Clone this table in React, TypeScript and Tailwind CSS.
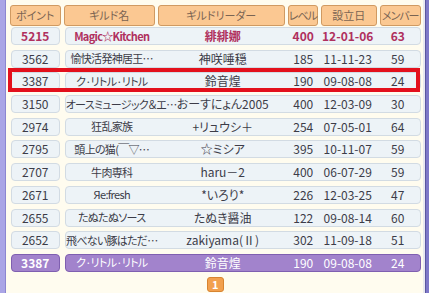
import React from "react";

type Row = {
  point: string;
  name: string;
  leader: string;
  level: string;
  date: string;
  member: string;
};

const rows: Row[] = [
  { point: "5215", name: "Magic☆Kitchen", leader: "緋緋娜", level: "400", date: "12-01-06", member: "63" },
  { point: "3562", name: "愉快活発神居王…", leader: "神咲唾穏", level: "185", date: "11-11-23", member: "59" },
  { point: "3387", name: "ク·リトル·リトル", leader: "鈴音煌", level: "190", date: "09-08-08", member: "24" },
  { point: "3150", name: "オースミュージック＆エ…", leader: "おーすにょん2005", level: "400", date: "12-03-09", member: "30" },
  { point: "2974", name: "狂乱家族", leader: "+リュウシ＋", level: "254", date: "07-05-01", member: "64" },
  { point: "2795", name: "頭上の猫(￣▽…", leader: "☆ミシア", level: "395", date: "10-11-07", member: "59" },
  { point: "2707", name: "牛肉専科", leader: "haru－2", level: "400", date: "06-07-29", member: "59" },
  { point: "2671", name: "Яe:fresh", leader: "*いろり*", level: "226", date: "12-03-25", member: "47" },
  { point: "2655", name: "たぬたぬソース", leader: "たぬき醤油", level: "122", date: "09-08-14", member: "60" },
  { point: "2652", name: "飛べない豚はただ…", leader: "zakiyama(Ⅱ)", level: "302", date: "11-09-18", member: "51" },
];

const font = { fontFamily: '"Noto Sans CJK JP", "Liberation Sans", sans-serif' };

function Cols({ r, cls }: { r: Row; cls: string }) {
  return (
    <>
      <div className={`w-[92px] whitespace-nowrap text-center text-[11px] tracking-[-0.7px] ${cls}`}>{r.name}</div>
      <div className={`w-[130px] whitespace-nowrap text-center ${cls}`}>{r.leader}</div>
      <div className={`w-[31px] text-center ${cls}`}>{r.level}</div>
      <div className={`w-[58px] text-center ${cls}`}>{r.date}</div>
      <div className={`w-[42px] text-center ${cls}`}>{r.member}</div>
    </>
  );
}

function DataRow({ r, top }: { r: Row; top?: boolean }) {
  const txt = top ? "font-bold text-[#b0305e]" : "text-[#3c3c48]";
  return (
    <div className="flex h-[18px] items-center gap-[5px] text-[12px] leading-none">
      <div className={`flex h-full w-[49px] items-center justify-center rounded-[4px] border border-[#d2dbe3] bg-[#edf3f7] ${txt}`}>
        {r.point}
      </div>
      <div className="flex h-full flex-1 items-center rounded-[4px] border border-[#d2dbe3] bg-[#edf3f7]">
        <Cols r={r} cls={txt} />
      </div>
    </div>
  );
}

export default function App() {
  const head =
    "flex h-[21px] items-center justify-center whitespace-nowrap rounded-[3px] border border-[#d09a62] bg-[#fbc892] text-[11px] leading-none text-[#7a6452]";
  const mine: Row = { point: "3387", name: "ク·リトル·リトル", leader: "鈴音煌", level: "190", date: "09-08-08", member: "24" };
  return (
    <div className="flex h-[293px] w-[429px] bg-[#fffcef] [font-feature-settings:'palt']" style={font}>
      <div className="w-[7px] border-r border-[#8c86d0] bg-[#aaa5e6]" />
      <div className="relative flex flex-1 flex-col pl-[4px] pr-[2px] pt-[5px]">
        <div className="flex gap-[3px]">
          <div className={`${head} w-[51px]`}>ポイント</div>
          <div className={`${head} w-[91px]`}>ギルド名</div>
          <div className={`${head} w-[127px]`}>ギルドリーダー</div>
          <div className={`${head} w-[30px] tracking-[-1px]`}>レベル</div>
          <div className={`${head} w-[56px]`}>設立日</div>
          <div className={`${head} w-[41px] tracking-[-1px]`}>メンバー</div>
        </div>
        <div className="mt-[1px] flex flex-col gap-[4.7px] pl-[1px]">
          {rows.map((r, i) => (
            <DataRow key={i} r={r} top={i === 0} />
          ))}
          <div className="flex h-[18px] items-center gap-[5px] text-[12px] leading-none text-white">
            <div className="flex h-full w-[49px] items-center justify-center rounded-[4px] border border-[#7f5fb0] bg-[#a283cc] font-bold">
              {mine.point}
            </div>
            <div className="flex h-full flex-1 items-center rounded-[4px] border border-[#7f5fb0] bg-[#a283cc]">
              <Cols r={mine} cls="text-white" />
            </div>
          </div>
        </div>
        <div className="mt-[5px] flex justify-center">
          <div className="flex h-[15px] w-[17px] items-center justify-center rounded-[3px] border border-[#d88430] bg-[#f2a04e] text-[11px] font-bold leading-none text-white">
            1
          </div>
        </div>
        <div className="absolute left-[2px] top-[68px] h-[24px] w-[412px] border-[4px] border-[#e3101c]" />
      </div>
      <div className="flex w-[8px]">
        <div className="w-[2px] bg-[#e8e8f0]" />
        <div className="flex-1 border-l border-[#5a56a0] bg-[#7e78c8]" />
      </div>
    </div>
  );
}
